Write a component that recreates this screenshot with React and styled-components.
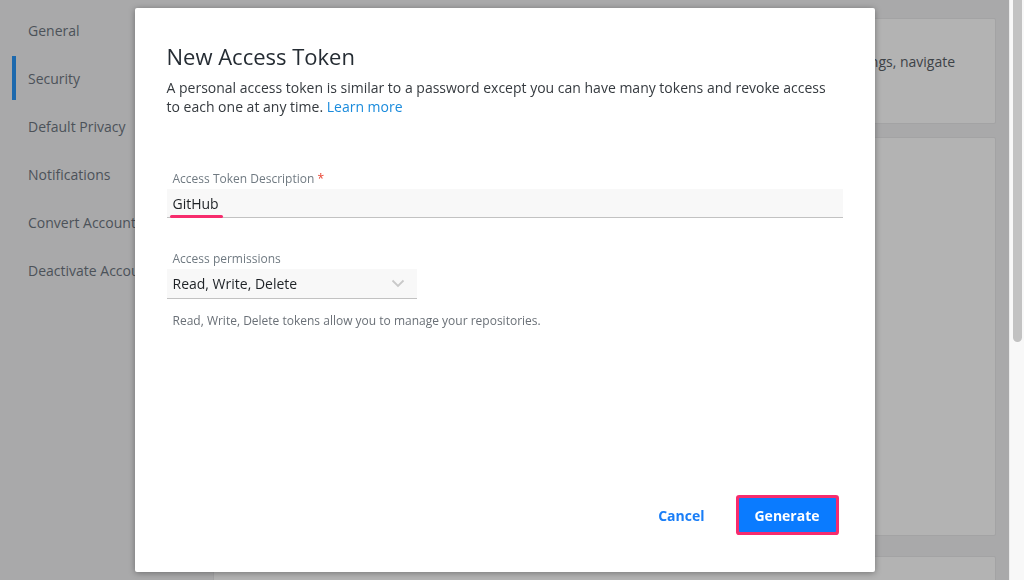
import React from 'react';
import styled, { createGlobalStyle } from 'styled-components';

const GlobalStyle = createGlobalStyle`
  html, body {
    margin: 0;
    padding: 0;
    height: 100%;
    overflow: hidden;
    font-family: "Open Sans", "Noto Sans", sans-serif;
  }
  #root {
    height: 100%;
  }
`;

const navItems = [
    'General',
    'Security',
    'Default Privacy',
    'Notifications',
    'Convert Account',
    'Deactivate Account',
];

const App = () => {
    return (
        <>
            <GlobalStyle />
            <Page>
                <Sidebar>
                    {navItems.map((item) => (
                        <NavItem key={item} active={item === 'Security'}>{item}</NavItem>
                    ))}
                </Sidebar>
                <Main>
                    <Panel height="106px" gap="0">
                        <PanelText>
                            Personal access tokens are an alternative to your password when you sign in with the CLI. For settings, navigate
                            <br />
                            to Account Settings.
                        </PanelText>
                    </Panel>
                    <Panel height="399px" gap="13px" />
                    <Panel height="40px" gap="20px" />
                </Main>
                <Scrollbar>
                    <Thumb />
                </Scrollbar>
            </Page>

            <Overlay>
                <Modal>
                    <Title>New Access Token</Title>
                    <Description>
                        A personal access token is similar to a password except you can have many tokens and revoke access
                        to each one at any time. <Link href="#">Learn more</Link>
                    </Description>

                    <Label top="55px">Access Token Description <Required>*</Required></Label>
                    <TextField>
                        <Value>GitHub</Value>
                    </TextField>

                    <Label top="33px">Access permissions</Label>
                    <Select>
                        <span>Read, Write, Delete</span>
                        <svg width="14" height="9" viewBox="0 0 14 9" fill="none">
                            <path d="M1.5 1.5L7 7L12.5 1.5" stroke="#c9c9c9" strokeWidth="1.8" />
                        </svg>
                    </Select>
                    <HelpText>Read, Write, Delete tokens allow you to manage your repositories.</HelpText>

                    <Footer>
                        <CancelButton>Cancel</CancelButton>
                        <GenerateButton>Generate</GenerateButton>
                    </Footer>
                </Modal>
            </Overlay>
        </>
    );
};

const Page = styled.div`
  display: flex;
  height: 100%;
  overflow: hidden;
  background-color: #a9a9aa;
`

const Sidebar = styled.div`
  display: flex;
  flex-direction: column;
  width: 213px;
  flex-shrink: 0;
  padding-top: 8px;
`

const NavItem = styled.div`
  display: flex;
  align-items: center;
  height: 44px;
  margin: 0 0 4px 12px;
  padding-left: 12px;
  font-size: 14px;
  color: #4c5259;
  white-space: nowrap;
  border-left: 4px solid ${props => props.active ? '#1d69ad' : 'transparent'};
`

const Main = styled.div`
  display: flex;
  flex: 1;
  flex-direction: column;
  overflow: hidden;
  padding: 18px 13px 0 0;
`

const Panel = styled.div`
  height: ${props => props.height};
  margin-top: ${props => props.gap};
  flex-shrink: 0;
  background-color: #b3b3b3;
  border: 1px solid #a3a3a4;
  border-radius: 2px;
  box-sizing: border-box;
  padding: 33px 24px 0 16px;
`

const PanelText = styled.p`
  margin: 0;
  font-size: 14px;
  line-height: 19px;
  color: #3d4247;
  white-space: nowrap;
  overflow: hidden;
`

const Scrollbar = styled.div`
  width: 15px;
  flex-shrink: 0;
  background-color: #f8f8f8;
  border-left: 1px solid #ececec;
  box-sizing: border-box;
  padding: 0 2px 0 3px;
`

const Thumb = styled.div`
  height: 342px;
  background-color: #c2c2c2;
  border-radius: 0 0 5px 5px;
`

const Overlay = styled.div`
  position: fixed;
  top: 0;
  left: 0;
  bottom: 0;
  right: 15px;
  display: flex;
  align-items: center;
  justify-content: center;
`

const Modal = styled.div`
  display: flex;
  flex-direction: column;
  width: 740px;
  height: 564px;
  box-sizing: border-box;
  padding: 33px 32px 40px 32px;
  background-color: #ffffff;
  border-radius: 2px;
  box-shadow: 0 1px 6px rgba(0, 0, 0, 0.35);
`

const Title = styled.h2`
  margin: 0;
  font-size: 22px;
  line-height: 30px;
  font-weight: 400;
  color: #252c33;
`

const Description = styled.p`
  margin: 7px 0 0 0;
  font-size: 14px;
  line-height: 19px;
  color: #353a3f;
`

const Link = styled.a`
  color: #1a8bdc;
  text-decoration: none;
`

const Label = styled.div`
  margin-top: ${props => props.top};
  padding-left: 6px;
  font-size: 12px;
  line-height: 16px;
  color: #707a82;
`

const Required = styled.span`
  color: #e8412f;
`

const TextField = styled.div`
  display: flex;
  align-items: center;
  height: 28px;
  margin-top: 2px;
  padding: 0 6px;
  background-color: #f8f8f8;
  border-bottom: 1px solid #c2c2c2;
`

const Value = styled.span`
  position: relative;
  font-size: 14px;
  color: #1e2226;

  &::after {
    content: '';
    position: absolute;
    left: -3px;
    right: -4px;
    bottom: -5px;
    height: 3px;
    border-radius: 2px;
    background-color: #f72c6d;
  }
`

const Select = styled.div`
  display: flex;
  align-items: center;
  justify-content: space-between;
  width: 232px;
  height: 29px;
  margin-top: 2px;
  padding: 0 12px 0 6px;
  background-color: #f8f8f8;
  border-bottom: 1px solid #c2c2c2;
  font-size: 14px;
  color: #1e2226;
`

const HelpText = styled.div`
  margin-top: 14px;
  padding-left: 6px;
  font-size: 12px;
  line-height: 16px;
  color: #6a7077;
`

const Footer = styled.div`
  display: flex;
  flex: 1;
  align-items: flex-end;
  justify-content: flex-end;
  gap: 34px;
  padding-right: 7px;
`

const CancelButton = styled.button`
  height: 34px;
  padding: 0;
  border: none;
  background: none;
  font-family: inherit;
  font-size: 14px;
  font-weight: 700;
  color: #1a7ef7;
  cursor: pointer;
`

const GenerateButton = styled.button`
  width: 97px;
  height: 34px;
  border: none;
  border-radius: 1px;
  background-color: #0a7bff;
  font-family: inherit;
  font-size: 14px;
  font-weight: 700;
  color: #ffffff;
  box-shadow: 0 0 0 3px #f72c6d;
  cursor: pointer;
`

export default App;
